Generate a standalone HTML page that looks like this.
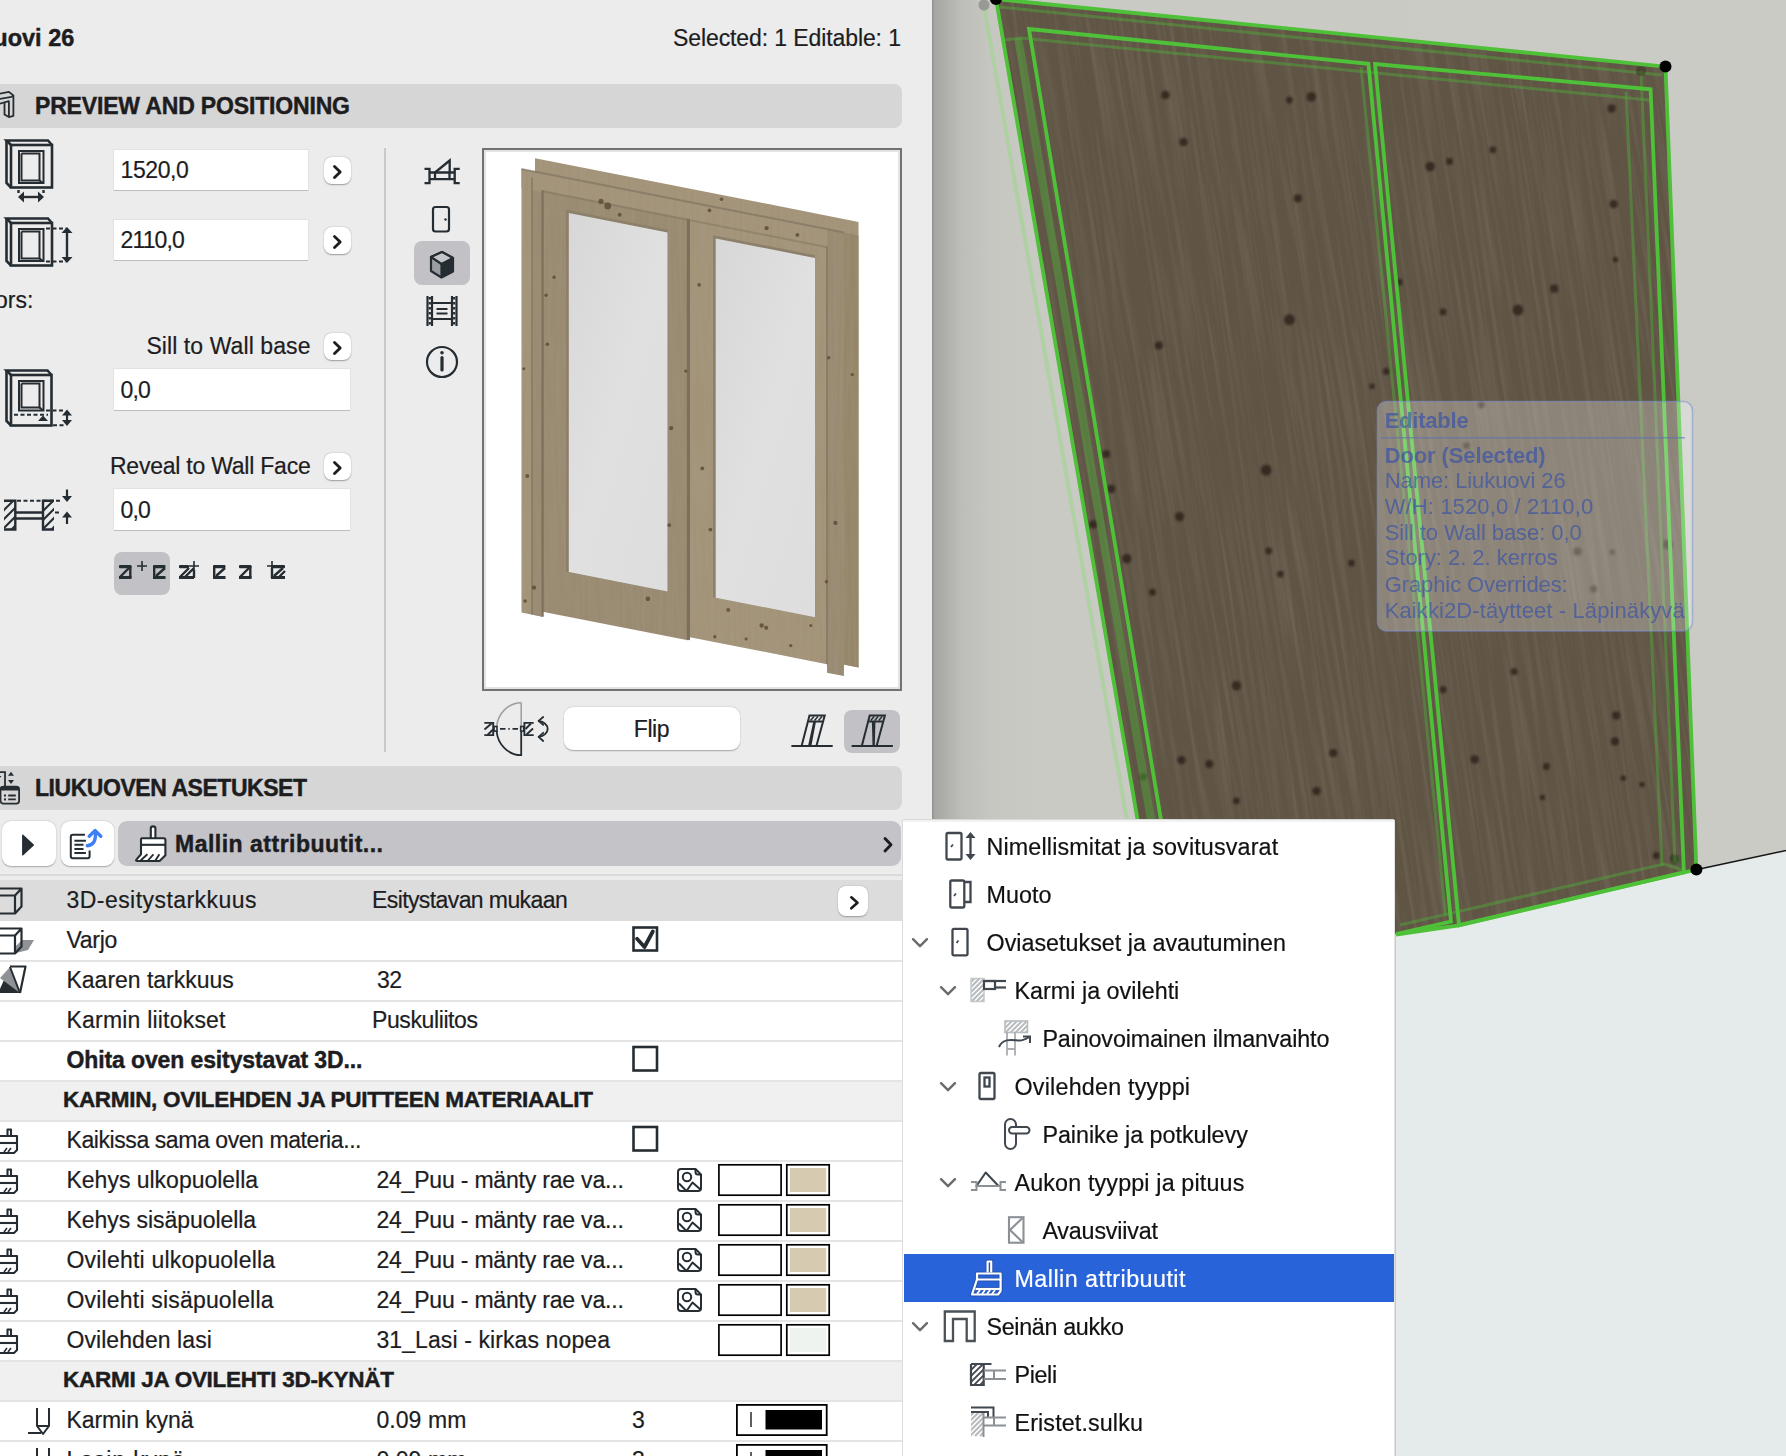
<!DOCTYPE html>
<html><head><meta charset="utf-8"><style>
html,body{margin:0;padding:0;width:1786px;height:1456px;overflow:hidden;background:#ececec;}
body{position:relative;font-family:"Liberation Sans",sans-serif;}
.t{position:absolute;white-space:pre;line-height:30px;font-family:"Liberation Sans",sans-serif;}
svg{overflow:visible}
</style></head><body>
<svg style="position:absolute;left:0;top:0" width="1786" height="1456" viewBox="0 0 1786 1456"><defs>
<linearGradient id="wallg" gradientUnits="userSpaceOnUse" x1="932" y1="0" x2="1786" y2="0">
<stop offset="0" stop-color="#8e8e8b"/><stop offset="0.003" stop-color="#a6a6a2"/><stop offset="0.012" stop-color="#acaca8"/><stop offset="0.035" stop-color="#bdbdb9"/><stop offset="0.07" stop-color="#c7c7c2"/><stop offset="0.13" stop-color="#cacac5"/><stop offset="1" stop-color="#cbcbc6"/>
</linearGradient>
<filter id="grain" x="0" y="0" width="1" height="1" filterUnits="objectBoundingBox">
<feTurbulence type="fractalNoise" baseFrequency="0.22 0.006" numOctaves="3" seed="5" result="n"/>
<feColorMatrix in="n" type="matrix" values="0 0 0 0 0.45  0 0 0 0 0.41  0 0 0 0 0.35  1.1 0 0 0 -0.45" result="c"/>
<feComposite in="c" in2="SourceGraphic" operator="in"/>
</filter>
</defs><rect x="932" y="0" width="854" height="1456" fill="url(#wallg)"/><polygon points="1696.4,869.6 1786.0,850.5 1786.0,1456.0 1396.0,1456.0 1396.0,934.0" fill="#e5ebea"/><line x1="1696" y1="869.8" x2="1790" y2="849.6" stroke="#151515" stroke-width="1.5"/><polygon points="996.0,-1.0 1665.5,66.6 1696.4,869.6 1459.0,925.0 1396.0,934.0 1180.0,990.0 1168.6,1000.0" fill="#605545"/><defs><clipPath id="doorclip"><polygon points="996.0,-1.0 1665.5,66.6 1696.4,869.6 1459.0,925.0 1396.0,934.0 1180.0,990.0 1168.6,1000.0"/></clipPath></defs><g clip-path="url(#doorclip)" opacity="0.3"><rect x="850" y="-150" width="1000" height="1250" fill="#fff" filter="url(#grain)" transform="rotate(-9 1300 500)"/></g><defs><filter id="kb" x="-1" y="-1" width="3" height="3"><feGaussianBlur stdDeviation="0.9"/></filter></defs><g filter="url(#kb)"><circle cx="1165.4" cy="94.9" r="4.1" fill="#2a2116" opacity="0.8"/><circle cx="1289.4" cy="100.1" r="3.4" fill="#2a2116" opacity="0.8"/><circle cx="1311.3" cy="96.9" r="4.7" fill="#2a2116" opacity="0.8"/><circle cx="1183.5" cy="142.1" r="4.1" fill="#2a2116" opacity="0.8"/><circle cx="1297.8" cy="198.3" r="4.1" fill="#2a2116" opacity="0.8"/><circle cx="1430.2" cy="166.6" r="4.7" fill="#2a2116" opacity="0.8"/><circle cx="1449.5" cy="161.4" r="3.4" fill="#2a2116" opacity="0.8"/><circle cx="1492.8" cy="149.8" r="3.4" fill="#2a2116" opacity="0.8"/><circle cx="1611.6" cy="108.5" r="4.1" fill="#2a2116" opacity="0.8"/><circle cx="1613.6" cy="204.1" r="4.1" fill="#2a2116" opacity="0.8"/><circle cx="1615.5" cy="259.6" r="2.7" fill="#2a2116" opacity="0.8"/><circle cx="1289.4" cy="319.7" r="5.4" fill="#2a2116" opacity="0.8"/><circle cx="1158.9" cy="345.5" r="4.1" fill="#2a2116" opacity="0.8"/><circle cx="1386.3" cy="371.3" r="3.4" fill="#2a2116" opacity="0.8"/><circle cx="1372.1" cy="386.2" r="2.7" fill="#2a2116" opacity="0.8"/><circle cx="1399.2" cy="282.2" r="3.4" fill="#2a2116" opacity="0.8"/><circle cx="1443.1" cy="311.9" r="3.4" fill="#2a2116" opacity="0.8"/><circle cx="1518.0" cy="310.0" r="5.4" fill="#2a2116" opacity="0.8"/><circle cx="1554.2" cy="288.7" r="4.1" fill="#2a2116" opacity="0.8"/><circle cx="1266.1" cy="470.1" r="5.4" fill="#2a2116" opacity="0.8"/><circle cx="1106.0" cy="454.0" r="4.1" fill="#2a2116" opacity="0.8"/><circle cx="1111.2" cy="488.9" r="4.1" fill="#2a2116" opacity="0.8"/><circle cx="1179.6" cy="516.6" r="4.7" fill="#2a2116" opacity="0.8"/><circle cx="1093.1" cy="524.4" r="4.1" fill="#2a2116" opacity="0.8"/><circle cx="1126.7" cy="558.6" r="4.7" fill="#2a2116" opacity="0.8"/><circle cx="1152.5" cy="592.2" r="3.4" fill="#2a2116" opacity="0.8"/><circle cx="1268.7" cy="550.9" r="3.4" fill="#2a2116" opacity="0.8"/><circle cx="1280.3" cy="574.1" r="3.4" fill="#2a2116" opacity="0.8"/><circle cx="1351.4" cy="563.1" r="3.4" fill="#2a2116" opacity="0.8"/><circle cx="1236.4" cy="685.8" r="4.7" fill="#2a2116" opacity="0.8"/><circle cx="1333.3" cy="753.0" r="4.1" fill="#2a2116" opacity="0.8"/><circle cx="1316.5" cy="791.1" r="4.1" fill="#2a2116" opacity="0.8"/><circle cx="1236.4" cy="800.8" r="3.4" fill="#2a2116" opacity="0.8"/><circle cx="1181.5" cy="760.1" r="4.1" fill="#2a2116" opacity="0.8"/><circle cx="1209.3" cy="764.0" r="4.1" fill="#2a2116" opacity="0.8"/><circle cx="1143.4" cy="776.9" r="3.4" fill="#2a2116" opacity="0.8"/><circle cx="1514.1" cy="671.6" r="3.4" fill="#2a2116" opacity="0.8"/><circle cx="1616.2" cy="715.5" r="4.1" fill="#2a2116" opacity="0.8"/><circle cx="1614.9" cy="741.4" r="4.1" fill="#2a2116" opacity="0.8"/><circle cx="1642.0" cy="784.6" r="2.7" fill="#2a2116" opacity="0.8"/><circle cx="1623.3" cy="778.2" r="2.7" fill="#2a2116" opacity="0.8"/><circle cx="1474.7" cy="759.4" r="4.1" fill="#2a2116" opacity="0.8"/><circle cx="1546.4" cy="766.5" r="3.4" fill="#2a2116" opacity="0.8"/><circle cx="1542.5" cy="797.5" r="2.7" fill="#2a2116" opacity="0.8"/><circle cx="1443.1" cy="689.7" r="3.4" fill="#2a2116" opacity="0.8"/><circle cx="1674.3" cy="858.9" r="4.1" fill="#2a2116" opacity="0.8"/><circle cx="1656.2" cy="855.7" r="3.4" fill="#2a2116" opacity="0.8"/><circle cx="1577.4" cy="551.5" r="4.1" fill="#2a2116" opacity="0.8"/><circle cx="1612.3" cy="552.1" r="2.7" fill="#2a2116" opacity="0.8"/><circle cx="1481.2" cy="404.9" r="3.4" fill="#2a2116" opacity="0.8"/><circle cx="1466.3" cy="445.6" r="3.4" fill="#2a2116" opacity="0.8"/><circle cx="1593.6" cy="589.0" r="3.4" fill="#2a2116" opacity="0.8"/><circle cx="1667.8" cy="544.4" r="4.7" fill="#2a2116" opacity="0.8"/></g><line x1="984" y1="6" x2="1127" y2="820" stroke="#9cd58d" stroke-opacity="0.6" stroke-width="4"/><circle cx="984" cy="5" r="5.5" fill="#8d8d8d" opacity="0.8"/><polyline points="1000.0,7.0 1662.0,75.0" fill="none" stroke="#4fae3a" stroke-opacity="0.45" stroke-width="3"/><polyline points="1004.0,40.0 1021.0,38.0 1649.0,100.0" fill="none" stroke="#4fae3a" stroke-opacity="0.45" stroke-width="3"/><line x1="1018" y1="38" x2="1151" y2="820" stroke="#4fae3a" stroke-opacity="0.45" stroke-width="8"/><line x1="1361" y1="67" x2="1445.5" y2="915" stroke="#4fae3a" stroke-opacity="0.45" stroke-width="3"/><line x1="1626" y1="92" x2="1662" y2="866" stroke="#4fae3a" stroke-opacity="0.45" stroke-width="3"/><line x1="1641" y1="71" x2="1675" y2="862" stroke="#4fae3a" stroke-opacity="0.45" stroke-width="3"/><polyline points="1400.0,925.0 1664.0,864.0 1683.0,870.0" fill="none" stroke="#4fae3a" stroke-opacity="0.45" stroke-width="3"/><circle cx="1641" cy="71" r="5" fill="#3a3020" opacity="0.5"/><circle cx="1676" cy="860" r="5" fill="#3a6a30" opacity="0.45"/><polyline points="1168.6,1000.0 996.0,-1.0 1665.5,66.6 1696.4,869.6 1459.0,925.5 1396.0,934.5" fill="none" stroke="#4ec139" stroke-width="3.8" stroke-linejoin="miter"/><polyline points="1191.0,1000.0 1029.0,29.0 1368.4,63.8 1451.0,921.5 1396.0,934.0" fill="none" stroke="#4ec139" stroke-width="3.8" stroke-linejoin="miter"/><polygon points="1375.0,64.0 1650.6,89.3 1683.9,872.3 1459.0,925.1" fill="none" stroke="#4ec139" stroke-width="3.8" stroke-linejoin="miter"/><circle cx="1665.5" cy="66.6" r="6" fill="#000"/><circle cx="1696.4" cy="869.6" r="6" fill="#000"/><circle cx="996" cy="-1" r="6" fill="#000"/><rect x="1377.5" y="401.5" width="315" height="229.5" rx="9" fill="#ffffff" fill-opacity="0.28" stroke="#7d93d6" stroke-opacity="0.55" stroke-width="1.6"/><line x1="1381" y1="437.7" x2="1685" y2="437.7" stroke="#5a6fb8" stroke-opacity="0.6" stroke-width="1.6"/></svg>
<div class="t" style="left:1384.7px;top:406.38px;font-size:22px;font-weight:bold;-webkit-text-stroke:0.45px currentColor;letter-spacing:-0.225px;color:rgba(45,75,175,0.6);-webkit-text-stroke:0;">Editable</div>
<div class="t" style="left:1384.7px;top:440.68px;font-size:22px;font-weight:bold;-webkit-text-stroke:0.45px currentColor;letter-spacing:-0.114px;color:rgba(45,75,175,0.6);-webkit-text-stroke:0;">Door (Selected)</div>
<div class="t" style="left:1384.7px;top:466.38px;font-size:22px;-webkit-text-stroke:0.2px currentColor;letter-spacing:-0.076px;color:rgba(45,75,175,0.6);-webkit-text-stroke:0;">Name: Liukuovi 26</div>
<div class="t" style="left:1384.7px;top:492.08px;font-size:22px;-webkit-text-stroke:0.2px currentColor;letter-spacing:0.117px;color:rgba(45,75,175,0.6);-webkit-text-stroke:0;">W/H: 1520,0 / 2110,0</div>
<div class="t" style="left:1384.7px;top:517.78px;font-size:22px;-webkit-text-stroke:0.2px currentColor;letter-spacing:-0.071px;color:rgba(45,75,175,0.6);-webkit-text-stroke:0;">Sill to Wall base: 0,0</div>
<div class="t" style="left:1384.7px;top:543.38px;font-size:22px;-webkit-text-stroke:0.2px currentColor;letter-spacing:-0.035px;color:rgba(45,75,175,0.6);-webkit-text-stroke:0;">Story: 2. 2. kerros</div>
<div class="t" style="left:1384.7px;top:570.08px;font-size:22px;-webkit-text-stroke:0.2px currentColor;letter-spacing:-0.096px;color:rgba(45,75,175,0.6);-webkit-text-stroke:0;">Graphic Overrides:</div>
<div class="t" style="left:1384.7px;top:595.78px;font-size:22px;-webkit-text-stroke:0.2px currentColor;letter-spacing:0.099px;color:rgba(45,75,175,0.6);-webkit-text-stroke:0;">Kaikki2D-täytteet - Läpinäkyvä</div>
<div style="position:absolute;left:0px;top:0px;width:932px;height:1456px;background:#ececec;"></div>
<div style="position:absolute;left:-10px;top:84px;width:912px;height:44px;background:#d6d6d6;border-radius:8px;"></div>
<div style="position:absolute;left:-10px;top:766px;width:912px;height:44px;background:#d6d6d6;border-radius:8px;"></div>
<div class="t" style="left:673px;top:23.03px;font-size:23px;-webkit-text-stroke:0.2px currentColor;letter-spacing:-0.099px;color:#1d1d1f;">Selected: 1 Editable: 1</div>
<div class="t" style="left:-55px;top:22.86px;font-size:23.5px;font-weight:bold;-webkit-text-stroke:0.45px currentColor;color:#1d1d1f;">Liukuovi 26</div>
<div class="t" style="left:35px;top:91.03px;font-size:23px;font-weight:bold;-webkit-text-stroke:0.45px currentColor;letter-spacing:-0.165px;color:#1d1d1f;">PREVIEW AND POSITIONING</div>
<div class="t" style="left:35px;top:773.03px;font-size:23px;font-weight:bold;-webkit-text-stroke:0.45px currentColor;letter-spacing:-0.460px;color:#1d1d1f;">LIUKUOVEN ASETUKSET</div>
<svg style="position:absolute;left:0px;top:0px;" width="40" height="130" viewBox="0 0 40 130"><g fill="none" stroke="#252d33" stroke-width="1.8" stroke-linejoin="round"><path d="M-2,94.1 L8.9,91.9 L13.4,95.5 L13.4,115.8 L8.9,117.1 L4.5,114.4 L4.5,102.5"/><path d="M-2,99.3 L11.5,96.9 L13.4,95.5"/><path d="M-2,104.2 L8.9,101.2 L8.9,117.1"/></g></svg>
<svg style="position:absolute;left:0px;top:0px;" width="40" height="820" viewBox="0 0 40 820"><g fill="none" stroke="#252d33" stroke-width="1.8"><path d="M-4,772.2 L5,772.2 L5,786.5"/><rect x="0.5" y="786.6" width="18.6" height="17" rx="2.8"/><path d="M8.2,795.5 L15.8,795.5 M8.2,799.4 L15.8,799.4"/></g><g fill="#252d33"><path d="M8,775.8 L11,771.8 L14,775.8 Z M8,780 L11,784 L14,780 Z"/><rect x="0.5" y="786.6" width="18.6" height="3.8" rx="1.5"/><rect x="4" y="794.5" width="2" height="2"/><rect x="4" y="798.4" width="2" height="2"/><path d="M-1,776 L1.5,776 L-1,779 Z"/></g></svg>
<div style="position:absolute;left:114px;top:150px;width:194px;height:40px;background:#fff;box-shadow:0 1px 0 #bdbdbd, 0 0 0 0.5px #d8d8d8;"></div>
<div class="t" style="left:120.5px;top:155.23px;font-size:23px;-webkit-text-stroke:0.2px currentColor;letter-spacing:-0.412px;color:#1d1d1f;">1520,0</div>
<div style="position:absolute;left:324px;top:157px;width:27px;height:27px;background:#fff;border-radius:8px;box-shadow:0 0.5px 1.5px rgba(0,0,0,0.35);"></div>
<svg style="position:absolute;left:324px;top:157px;" width="27" height="27" viewBox="0 0 27 27"><path d="M10.5,9.5 L16.2,15 L10.5,20.5" fill="none" stroke="#1d1d1f" stroke-width="2.8" stroke-linecap="round" stroke-linejoin="round"/></svg>
<div style="position:absolute;left:114px;top:220px;width:194px;height:40px;background:#fff;box-shadow:0 1px 0 #bdbdbd, 0 0 0 0.5px #d8d8d8;"></div>
<div class="t" style="left:120.5px;top:225.03px;font-size:23px;-webkit-text-stroke:0.2px currentColor;letter-spacing:-0.848px;color:#1d1d1f;">2110,0</div>
<div style="position:absolute;left:324px;top:227px;width:27px;height:27px;background:#fff;border-radius:8px;box-shadow:0 0.5px 1.5px rgba(0,0,0,0.35);"></div>
<svg style="position:absolute;left:324px;top:227px;" width="27" height="27" viewBox="0 0 27 27"><path d="M10.5,9.5 L16.2,15 L10.5,20.5" fill="none" stroke="#1d1d1f" stroke-width="2.8" stroke-linecap="round" stroke-linejoin="round"/></svg>
<div class="t" style="left:-5px;top:285.03px;font-size:23px;-webkit-text-stroke:0.2px currentColor;color:#1d1d1f;">ors:</div>
<div class="t" style="right:1475.5px;top:331.03px;font-size:23px;-webkit-text-stroke:0.2px currentColor;letter-spacing:0.077px;color:#1d1d1f;">Sill to Wall base</div>
<div style="position:absolute;left:324px;top:333px;width:27px;height:27px;background:#fff;border-radius:8px;box-shadow:0 0.5px 1.5px rgba(0,0,0,0.35);"></div>
<svg style="position:absolute;left:324px;top:333px;" width="27" height="27" viewBox="0 0 27 27"><path d="M10.5,9.5 L16.2,15 L10.5,20.5" fill="none" stroke="#1d1d1f" stroke-width="2.8" stroke-linecap="round" stroke-linejoin="round"/></svg>
<div style="position:absolute;left:114px;top:369px;width:236px;height:41px;background:#fff;box-shadow:0 1px 0 #bdbdbd, 0 0 0 0.5px #d8d8d8;"></div>
<div class="t" style="left:120.5px;top:375.43px;font-size:23px;-webkit-text-stroke:0.2px currentColor;letter-spacing:-0.892px;color:#1d1d1f;">0,0</div>
<div class="t" style="right:1475.5px;top:451.03px;font-size:23px;-webkit-text-stroke:0.2px currentColor;letter-spacing:-0.231px;color:#1d1d1f;">Reveal to Wall Face</div>
<div style="position:absolute;left:324px;top:453px;width:27px;height:27px;background:#fff;border-radius:8px;box-shadow:0 0.5px 1.5px rgba(0,0,0,0.35);"></div>
<svg style="position:absolute;left:324px;top:453px;" width="27" height="27" viewBox="0 0 27 27"><path d="M10.5,9.5 L16.2,15 L10.5,20.5" fill="none" stroke="#1d1d1f" stroke-width="2.8" stroke-linecap="round" stroke-linejoin="round"/></svg>
<div style="position:absolute;left:114px;top:489px;width:236px;height:41px;background:#fff;box-shadow:0 1px 0 #bdbdbd, 0 0 0 0.5px #d8d8d8;"></div>
<div class="t" style="left:120.5px;top:495.43px;font-size:23px;-webkit-text-stroke:0.2px currentColor;letter-spacing:-0.892px;color:#1d1d1f;">0,0</div>
<div style="position:absolute;left:384px;top:148px;width:2px;height:604px;background:#c9c9c9;"></div>
<svg style="position:absolute;left:0px;top:0px;" width="100" height="600" viewBox="0 0 100 600"><g fill="none" stroke="#252d33" stroke-width="2.6" stroke-linejoin="miter"><path d="M11.0,145.0 L6.5,140.5 L48.0,140.5 L52.0,145.0"/><path d="M6.5,140.5 L6.5,183.0 L11.0,187.5"/><rect x="11.0" y="145.0" width="41.0" height="42.5"/></g><g fill="none" stroke="#252d33" stroke-width="2"><rect x="19" y="151" width="24.5" height="32"/><path d="M21.5,153.5 L21.5,180.5 L39.5,180.5 L39.5,153.5 L21.5,153.5"/><path d="M39.5,180.5 L43,183"/></g><g stroke="#252d33" stroke-width="2.4" fill="none"><path d="M22,197 L40,197"/><path d="M18.5,190 L18.5,193 M43.5,190 L43.5,193"/></g><g fill="#252d33"><path d="M18,197 L24,191.5 L24,202.5 Z M44,197 L38,191.5 L38,202.5 Z"/></g><g fill="none" stroke="#252d33" stroke-width="2.6" stroke-linejoin="miter"><path d="M11.0,223.0 L6.5,218.5 L48.0,218.5 L52.0,223.0"/><path d="M6.5,218.5 L6.5,261.0 L11.0,265.5"/><rect x="11.0" y="223.0" width="41.0" height="42.5"/></g><g fill="none" stroke="#252d33" stroke-width="2"><rect x="19" y="229" width="24.5" height="32"/><path d="M21.5,231.5 L21.5,258.5 L39.5,258.5 L39.5,231.5 L21.5,231.5"/><path d="M39.5,258.5 L43,261"/></g><g stroke="#252d33" stroke-width="2" fill="none" stroke-dasharray="4,2.5"><path d="M46,228.5 L66,228.5 M46,261.5 L66,261.5"/></g><g stroke="#252d33" stroke-width="2.4"><path d="M67,233 L67,257"/></g><g fill="#252d33"><path d="M67,227 L61.5,233 L72.5,233 Z M67,263 L61.5,257 L72.5,257 Z"/></g><g fill="none" stroke="#252d33" stroke-width="2.6" stroke-linejoin="miter"><path d="M11.0,375.0 L6.5,370.5 L47.5,370.5 L51.5,375.0"/><path d="M6.5,370.5 L6.5,421.0 L11.0,425.5"/><rect x="11.0" y="375.0" width="40.5" height="50.5"/></g><g fill="none" stroke="#252d33" stroke-width="2"><rect x="19" y="381" width="24.5" height="29.5"/><path d="M21.5,383.5 L21.5,407.5 L39.5,407.5 L39.5,383.5 L21.5,383.5"/><path d="M39.5,407.5 L43,410.5"/></g><g stroke="#252d33" stroke-width="2" fill="none" stroke-dasharray="4,2.5"><path d="M14,414.7 L48,414.7 M46,410.5 L65,410.5 M53,425.2 L65,425.2"/></g><g fill="#252d33"><path d="M38,421 L43,415.5 L48,421 Z M67,409.5 L62,415.5 L72,415.5 Z M67,426 L62,420 L72,420 Z"/></g><path d="M67,414 L67,421" stroke="#252d33" stroke-width="2.2"/><defs><clipPath id="hl"><rect x="4" y="501" width="11" height="28"/></clipPath><clipPath id="hr"><rect x="43" y="501" width="11" height="28"/></clipPath></defs><g stroke="#252d33" stroke-width="2" fill="none"><g clip-path="url(#hl)"><path d="M-30,535 L10,495"/><path d="M-21,535 L19,495"/><path d="M-12,535 L28,495"/><path d="M-3,535 L37,495"/><path d="M6,535 L46,495"/><path d="M15,535 L55,495"/><path d="M24,535 L64,495"/><path d="M33,535 L73,495"/></g><g clip-path="url(#hr)"><path d="M10,535 L50,495"/><path d="M19,535 L59,495"/><path d="M28,535 L68,495"/><path d="M37,535 L77,495"/><path d="M46,535 L86,495"/><path d="M55,535 L95,495"/><path d="M64,535 L104,495"/><path d="M73,535 L113,495"/></g></g><g stroke="#252d33" stroke-width="2.4" fill="none"><path d="M4,500.8 L15.3,500.8 L15.3,529.5 L4,529.5"/><path d="M54,500.8 L43,500.8 L43,529.5 L54,529.5"/><path d="M15,512.5 L43,512.5 M15,518.5 L43,518.5"/></g><g stroke="#252d33" stroke-width="2" fill="none" stroke-dasharray="4,2.5"><path d="M17,500.8 L60,500.8 M55,512.5 L60,512.5"/></g><g stroke="#252d33" stroke-width="2.2"><path d="M67,489.5 L67,498 M67,515 L67,524"/></g><g fill="#252d33"><path d="M67,502 L62,496 L72,496 Z M67,511.5 L62,517.5 L72,517.5 Z"/></g></svg>
<svg style="position:absolute;left:0px;top:0px;" width="500" height="400" viewBox="0 0 500 400"><g fill="none" stroke="#252d33" stroke-width="2.3"><path d="M424.5,168.9 L429.5,168.9 L429.5,183.1 L424.5,183.1 M459.7,168.9 L454.7,168.9 L454.7,183.1 L459.7,183.1"/><path d="M429.5,172.5 L454.7,172.5 M429.5,179.2 L454.7,179.2 M435,172.5 L435,179.2 M449.5,172.5 L449.5,179.2"/><path d="M435,172.5 L449.7,160.5 L449.7,172.5"/></g><rect x="433" y="207" width="16" height="24.5" rx="2.5" fill="none" stroke="#252d33" stroke-width="2.2"/><circle cx="445.5" cy="219.5" r="1.2" fill="#252d33"/></svg>
<div style="position:absolute;left:414px;top:241px;width:56px;height:44px;background:#c1c1c6;border-radius:8px;"></div>
<svg style="position:absolute;left:0px;top:0px;" width="500" height="400" viewBox="0 0 500 400"><path d="M442,252 L453,258 L453,271.5 L441.5,277.5 L431,271 L431,257 Z" fill="#9a9ea2" stroke="#252d33" stroke-width="2.2" stroke-linejoin="round"/><path d="M441.5,264 L453,258 L453,271.5 L441.5,277.5 Z" fill="#252d33"/><path d="M431,257 L442,252 L453,258 L441.5,264 Z" fill="#c4c6c9" stroke="#252d33" stroke-width="2.2" stroke-linejoin="round"/><path d="M441.5,264 L441.5,277.5" stroke="#252d33" stroke-width="2.2"/><g fill="none" stroke="#252d33" stroke-width="2.2"><path d="M427.5,296 L427.5,326 M432,296 L432,326 M452,296 L452,326 M456.5,296 L456.5,326"/><path d="M432,303 L452,303 M432,319 L452,319"/><path d="M436.5,309 L447.5,309 M436.5,313.5 L447.5,313.5"/></g><g stroke="#252d33" stroke-width="2.2" stroke-dasharray="2.5,2.5"><path d="M429.8,297 L429.8,326 M454.2,297 L454.2,326"/></g><circle cx="442" cy="362" r="15" fill="none" stroke="#252d33" stroke-width="2.2"/><circle cx="442" cy="352.8" r="1.8" fill="#252d33"/><path d="M442,357.5 L442,370" stroke="#252d33" stroke-width="3.2" stroke-linecap="round"/></svg>
<div style="position:absolute;left:482px;top:148px;width:420px;height:543px;background:#fff;box-sizing:border-box;border:2px solid #727272;box-shadow:inset 0 0 0 2px #e3e3e3;"></div>
<svg style="position:absolute;left:0px;top:0px;" width="910" height="700" viewBox="0 0 910 700"><defs><linearGradient id="glg" x1="0" y1="0" x2="1" y2="1"><stop offset="0" stop-color="#d6d7d6"/><stop offset="0.5" stop-color="#dfe0df"/><stop offset="1" stop-color="#dcdddc"/></linearGradient><filter id="wg" x="0" y="0" width="1" height="1"><feTurbulence type="fractalNoise" baseFrequency="0.35 0.012" numOctaves="2" seed="7" result="n"/><feColorMatrix in="n" type="matrix" values="0 0 0 0 0.45  0 0 0 0 0.4  0 0 0 0 0.33  0.8 0 0 0 -0.25" result="c"/><feComposite in="c" in2="SourceGraphic" operator="in"/></filter></defs><g transform="matrix(1,0.197,0,1,0,-102.74)"><rect x="535" y="155.5" width="323.5" height="445.5" fill="#a29378"/><rect x="844" y="169" width="14.5" height="432" fill="#958669"/><rect x="521.5" y="169" width="21" height="443.5" fill="#a29378"/><rect x="532" y="180" width="10.5" height="432.5" fill="#998a71"/><rect x="521.5" y="169" width="322.5" height="19" fill="#a29378"/><rect x="827" y="169" width="17" height="443.5" fill="#998a71"/><rect x="542.5" y="186" width="145.5" height="421.5" fill="#998a71"/><rect x="690" y="186" width="137" height="418" fill="#a29378"/><path d="M535,155.5 L858.5,155.5 L858.5,601 L844,601 L844,612.5 L827,612.5 L827,604 L690,604 L690,607.5 L542.5,607.5 L542.5,612.5 L521.5,612.5 L521.5,169 L535,169 Z" fill="#fff" filter="url(#wg)" opacity="0.45"/><rect x="531" y="176" width="2" height="436.5" fill="#7c705d" opacity="0.55"/><rect x="521.5" y="168" width="322.5" height="2" fill="#7c705d" opacity="0.6"/><rect x="542.5" y="186" width="284.5" height="2" fill="#7c705d" opacity="0.45"/><rect x="541.5" y="186" width="2.2" height="426.5" fill="#7c705d"/><rect x="686.8" y="186" width="3.2" height="421" fill="#7c705d"/><rect x="826" y="186" width="2" height="418" fill="#7c705d" opacity="0.6"/><rect x="566" y="201" width="102" height="362" fill="#8c806b"/><rect x="568.8" y="203.7" width="98.7" height="359" fill="url(#glg)"/><rect x="713" y="197.5" width="102" height="362" fill="#8c806b"/><rect x="715.7" y="200.2" width="99.3" height="359.3" fill="url(#glg)"/></g><circle cx="607.7" cy="205.9" r="3.38" fill="#5a4833" opacity="0.8"/><circle cx="601.0" cy="201.4" r="2.60" fill="#5a4833" opacity="0.8"/><circle cx="619.7" cy="214.8" r="1.95" fill="#5a4833" opacity="0.8"/><circle cx="721.5" cy="199.2" r="1.82" fill="#5a4833" opacity="0.8"/><circle cx="709.5" cy="210.4" r="1.82" fill="#5a4833" opacity="0.8"/><circle cx="766.6" cy="228.2" r="2.08" fill="#5a4833" opacity="0.8"/><circle cx="797.4" cy="234.9" r="1.95" fill="#5a4833" opacity="0.8"/><circle cx="554.1" cy="277.3" r="1.69" fill="#5a4833" opacity="0.8"/><circle cx="546.1" cy="295.2" r="1.69" fill="#5a4833" opacity="0.8"/><circle cx="547.4" cy="344.3" r="1.82" fill="#5a4833" opacity="0.8"/><circle cx="523.8" cy="368.8" r="1.56" fill="#5a4833" opacity="0.8"/><circle cx="527.3" cy="476.0" r="1.95" fill="#5a4833" opacity="0.8"/><circle cx="534.0" cy="587.6" r="2.21" fill="#5a4833" opacity="0.8"/><circle cx="525.1" cy="601.0" r="1.82" fill="#5a4833" opacity="0.8"/><circle cx="647.9" cy="598.8" r="2.34" fill="#5a4833" opacity="0.8"/><circle cx="671.1" cy="428.2" r="2.08" fill="#5a4833" opacity="0.8"/><circle cx="685.8" cy="371.1" r="1.69" fill="#5a4833" opacity="0.8"/><circle cx="669.3" cy="525.1" r="1.95" fill="#5a4833" opacity="0.8"/><circle cx="710.4" cy="529.6" r="1.95" fill="#5a4833" opacity="0.8"/><circle cx="702.3" cy="468.4" r="1.95" fill="#5a4833" opacity="0.8"/><circle cx="699.2" cy="284.9" r="1.82" fill="#5a4833" opacity="0.8"/><circle cx="828.7" cy="357.7" r="1.69" fill="#5a4833" opacity="0.8"/><circle cx="852.3" cy="374.6" r="1.69" fill="#5a4833" opacity="0.8"/><circle cx="835.4" cy="522.9" r="2.08" fill="#5a4833" opacity="0.8"/><circle cx="826.4" cy="581.8" r="1.69" fill="#5a4833" opacity="0.8"/><circle cx="728.2" cy="609.9" r="1.95" fill="#5a4833" opacity="0.8"/><circle cx="761.7" cy="625.5" r="2.21" fill="#5a4833" opacity="0.8"/><circle cx="766.2" cy="627.8" r="2.08" fill="#5a4833" opacity="0.8"/><circle cx="714.8" cy="636.7" r="1.69" fill="#5a4833" opacity="0.8"/><circle cx="790.7" cy="645.6" r="1.69" fill="#5a4833" opacity="0.8"/><circle cx="810.8" cy="625.5" r="1.56" fill="#5a4833" opacity="0.8"/><circle cx="746.1" cy="638.9" r="1.56" fill="#5a4833" opacity="0.8"/></svg>
<div style="position:absolute;left:564px;top:707px;width:176px;height:43px;background:#fff;border-radius:9px;box-shadow:0 0.5px 1.5px rgba(0,0,0,0.3);"></div>
<div class="t" style="left:651.5px;transform:translateX(-50%);top:714.03px;font-size:23px;-webkit-text-stroke:0.2px currentColor;letter-spacing:-0.421px;color:#1d1d1f;">Flip</div>
<svg style="position:absolute;left:0px;top:0px;" width="910" height="800" viewBox="0 0 910 800"><path d="M521.2,702.8 A25,26.3 0 0 0 496.6,727" fill="none" stroke="#9a9ea2" stroke-width="1.5"/><path d="M521.2,702.8 L521.2,726" stroke="#9a9ea2" stroke-width="1.5"/><path d="M496.6,731 A25,26.3 0 0 0 521.2,755.2 L521.2,731.5" fill="none" stroke="#252d33" stroke-width="1.8"/><g stroke="#252d33" stroke-width="1.8"><path d="M500,728.8 L505.5,728.8 M508.3,728.8 L509.7,728.8 M512.5,728.8 L518,728.8"/></g><g fill="none" stroke="#252d33" stroke-width="1.6"><rect x="494" y="726.5" width="3" height="4.6"/><rect x="520.7" y="726.5" width="3" height="4.6"/></g><g fill="none" stroke="#252d33" stroke-width="1.9"><path d="M484.3,722.9 L493.2,722.9 L493.2,735.1 L484.3,735.1"/><path d="M484.5,729.5 L491.5,723.5 M487.5,735 L493,729.5"/><path d="M533.7,722.9 L524.4,722.9 L524.4,735.1 L533.7,735.1"/><path d="M525.5,729 L531,723.5 M526.5,734.5 L533,728.5"/></g><g fill="none" stroke="#252d33" stroke-width="1.8" stroke-linecap="round" stroke-linejoin="round"><path d="M538.8,721 A10.5,8 0 0 1 538.8,736.8"/><path d="M543.2,717 L538.6,720.9 L543.2,724.9 M543.2,732.8 L538.6,736.9 L543.2,741"/></g><g fill="none" stroke="#252d33" stroke-width="2"><path d="M791.4,745.9 L832.7,745.9"/><path d="M801.8,745.3 L809.5,715.6 L824.7,715.6 L816.6,745.3"/><path d="M808.9,721.5 L822.3,721.5"/></g><g stroke="#252d33" stroke-width="1.5"><path d="M810.5,720.5 L814,716.5 M814.5,720.5 L818,716.5 M818.5,720.5 L822,716.5"/></g><path d="M808.2,745.3 L811.5,745.3 L815.9,722 L813.2,722 Z" fill="#252d33"/></svg>
<div style="position:absolute;left:844px;top:710px;width:56px;height:43px;background:#c1c1c6;border-radius:8px;"></div>
<svg style="position:absolute;left:0px;top:0px;" width="910" height="800" viewBox="0 0 910 800"><g fill="none" stroke="#252d33" stroke-width="2"><path d="M851.6,745.9 L892.9000000000001,745.9"/><path d="M862.0,745.3 L869.7,715.6 L884.9000000000001,715.6 L876.8000000000001,745.3"/><path d="M869.1,721.5 L882.5,721.5"/></g><g stroke="#252d33" stroke-width="1.5"><path d="M870.7,720.5 L874.2,716.5 M874.7,720.5 L878.2,716.5 M878.7,720.5 L882.2,716.5"/></g><path d="M871.9000000000001,722 L875.4000000000001,722 L874.8000000000001,745.3 L872.5,745.3 Z" fill="#252d33"/></svg>
<div style="position:absolute;left:114px;top:552px;width:56px;height:43px;background:#c1c1c6;border-radius:8px;"></div>
<svg style="position:absolute;left:0px;top:0px;" width="300" height="600" viewBox="0 0 300 600"><g fill="#252d33"><rect x="119" y="565" width="12.5" height="3.3" rx="1"/><rect x="119" y="576" width="12.5" height="3"/></g><g fill="none" stroke="#252d33" stroke-width="2.4"><path d="M130.3,566 L130.3,578"/><path d="M120,577 L129,568"/></g><path d="M137,566 L147,566 M142,561 L142,571" stroke="#252d33" stroke-width="1.6"/><g fill="#252d33"><rect x="153" y="565" width="12.5" height="3.3" rx="1"/><rect x="153" y="576" width="12.5" height="3"/></g><g fill="none" stroke="#252d33" stroke-width="2.4"><path d="M154.2,566 L154.2,578"/><path d="M156,576 L165,568"/></g><g fill="#252d33"><rect x="179" y="565" width="10" height="3.3" rx="1"/><rect x="179" y="576" width="15" height="3"/></g><g fill="none" stroke="#252d33" stroke-width="2.4"><path d="M180,577 L189,568 M185,577 L194,568 M194,570 L194,578"/></g><path d="M189,566 L199,566 M194,561 L194,571" stroke="#252d33" stroke-width="1.6"/><g fill="#252d33"><rect x="213" y="565" width="12.5" height="3.3" rx="1"/><rect x="213" y="576" width="12.5" height="3"/></g><g fill="none" stroke="#252d33" stroke-width="2.4"><path d="M214.2,566 L214.2,578"/><path d="M216,576 L225,568"/></g><g fill="#252d33"><rect x="239" y="565" width="12.5" height="3.3" rx="1"/><rect x="239" y="576" width="12.5" height="3"/></g><g fill="none" stroke="#252d33" stroke-width="2.4"><path d="M250.3,566 L250.3,578"/><path d="M240,577 L249,568"/></g><g fill="#252d33"><rect x="271" y="565" width="14" height="3.3" rx="1"/><rect x="271" y="576" width="14" height="3"/></g><g fill="none" stroke="#252d33" stroke-width="2.4"><path d="M272,568 L272,578 M274,576 L283,568 M279,577 L285,571"/></g><path d="M267,566 L277,566 M272,561 L272,571" stroke="#252d33" stroke-width="1.6"/></svg>
<div style="position:absolute;left:2px;top:821px;width:53.5px;height:45px;background:#fff;border-radius:9px;box-shadow:0 0.5px 1.5px rgba(0,0,0,0.3);"></div>
<div style="position:absolute;left:60.5px;top:821px;width:53.5px;height:45px;background:#fff;border-radius:9px;box-shadow:0 0.5px 1.5px rgba(0,0,0,0.3);"></div>
<div style="position:absolute;left:118px;top:821px;width:783px;height:45px;background:#c3c3c8;border-radius:9px;"></div>
<svg style="position:absolute;left:0px;top:0px;" width="910" height="900" viewBox="0 0 910 900"><path d="M22.8,835.3 L33.3,845 L22.8,854.8 Z" fill="#252d33" stroke="#252d33" stroke-width="1.4" stroke-linejoin="round"/><g fill="none" stroke="#252d33" stroke-width="2" stroke-linejoin="round"><path d="M84.9,834.8 L72.8,834.8 Q70.8,834.8 70.8,836.8 L70.8,856.3 Q70.8,858.3 72.8,858.3 L87.6,858.3 Q89.6,858.3 89.6,856.3 L89.6,850.6"/><path d="M74.4,840.8 L85.9,840.8 M74.4,844.8 L83.5,844.8 M74.4,849 L83.5,849 M74.4,853 L85.9,853"/></g><g fill="none" stroke="#3d7ff5" stroke-width="3.4" stroke-linecap="round" stroke-linejoin="round"><path d="M87.3,845.8 C93,845 96,842 95.5,831.5"/><path d="M89.2,836.2 L95.2,830.6 L100.8,836.2"/></g><g fill="#fff" stroke="#252d33" stroke-width="2.1" stroke-linejoin="round"><path d="M150.8,838.2 L150.8,828.6 Q150.8,826.4 153.1,826.4 Q155.4,826.4 155.4,828.6 L155.4,838.2"/><path d="M142,838.3 L163.8,838.3 Q165.4,838.3 165.4,840 L165.4,855.2 L159.6,861 L137.5,861 Q135.3,861 136.4,859.6 L141,854.3 L141,840 Q141,838.3 142,838.3 Z"/><path d="M141,844.8 L165.4,844.8"/></g><g stroke="#252d33" stroke-width="1.9"><path d="M140.6,860.5 L147.4,854.3 M148,860.5 L153.4,854.3 M155.4,860.5 L159.4,854.3"/></g></svg>
<div class="t" style="left:175px;top:829.03px;font-size:23px;font-weight:bold;-webkit-text-stroke:0.45px currentColor;letter-spacing:0.498px;color:#1d1d1f;">Mallin attribuutit...</div>
<svg style="position:absolute;left:0px;top:0px;" width="910" height="900" viewBox="0 0 910 900"><path d="M885,838.5 L891,844.8 L885,851" fill="none" stroke="#1d1d1f" stroke-width="2.9" stroke-linecap="round" stroke-linejoin="round"/></svg>
<div style="position:absolute;left:0px;top:874px;width:902px;height:2px;background:#dadada;"></div>
<div style="position:absolute;left:0px;top:880px;width:902px;height:576px;background:#fff;"></div>
<div style="position:absolute;left:0px;top:880px;width:902px;height:41px;background:#dcdcdc;"></div>
<div style="position:absolute;left:0px;top:1081px;width:902px;height:40px;background:#f0f0f0;"></div>
<div style="position:absolute;left:0px;top:1361px;width:902px;height:40px;background:#f0f0f0;"></div>
<div style="position:absolute;left:0px;top:960px;width:902px;height:2px;background:#e4e4e4;"></div>
<div style="position:absolute;left:0px;top:1000px;width:902px;height:2px;background:#e4e4e4;"></div>
<div style="position:absolute;left:0px;top:1040px;width:902px;height:2px;background:#e4e4e4;"></div>
<div style="position:absolute;left:0px;top:1080px;width:902px;height:2px;background:#e4e4e4;"></div>
<div style="position:absolute;left:0px;top:1120px;width:902px;height:2px;background:#e4e4e4;"></div>
<div style="position:absolute;left:0px;top:1160px;width:902px;height:2px;background:#e4e4e4;"></div>
<div style="position:absolute;left:0px;top:1200px;width:902px;height:2px;background:#e4e4e4;"></div>
<div style="position:absolute;left:0px;top:1240px;width:902px;height:2px;background:#e4e4e4;"></div>
<div style="position:absolute;left:0px;top:1280px;width:902px;height:2px;background:#e4e4e4;"></div>
<div style="position:absolute;left:0px;top:1320px;width:902px;height:2px;background:#e4e4e4;"></div>
<div style="position:absolute;left:0px;top:1360px;width:902px;height:2px;background:#e4e4e4;"></div>
<div style="position:absolute;left:0px;top:1400px;width:902px;height:2px;background:#e4e4e4;"></div>
<div style="position:absolute;left:0px;top:1440px;width:902px;height:2px;background:#e4e4e4;"></div>
<div style="position:absolute;left:902px;top:880px;width:2px;height:576px;background:#e2e2e2;"></div>
<div class="t" style="left:66.5px;top:884.53px;font-size:23px;-webkit-text-stroke:0.2px currentColor;letter-spacing:0.451px;color:#1d1d1f;">3D-esitystarkkuus</div>
<div class="t" style="left:372px;top:884.53px;font-size:23px;-webkit-text-stroke:0.2px currentColor;letter-spacing:-0.596px;color:#1d1d1f;">Esitystavan mukaan</div>
<div class="t" style="left:66.5px;top:924.53px;font-size:23px;-webkit-text-stroke:0.2px currentColor;letter-spacing:-0.300px;color:#1d1d1f;">Varjo</div>
<div class="t" style="left:66.5px;top:964.53px;font-size:23px;-webkit-text-stroke:0.2px currentColor;letter-spacing:-0.013px;color:#1d1d1f;">Kaaren tarkkuus</div>
<div class="t" style="left:377px;top:964.53px;font-size:23px;-webkit-text-stroke:0.2px currentColor;letter-spacing:-0.594px;color:#1d1d1f;">32</div>
<div class="t" style="left:66.5px;top:1004.53px;font-size:23px;-webkit-text-stroke:0.2px currentColor;letter-spacing:0.204px;color:#1d1d1f;">Karmin liitokset</div>
<div class="t" style="left:372px;top:1004.53px;font-size:23px;-webkit-text-stroke:0.2px currentColor;letter-spacing:-0.394px;color:#1d1d1f;">Puskuliitos</div>
<div class="t" style="left:66.5px;top:1044.53px;font-size:23px;font-weight:bold;-webkit-text-stroke:0.45px currentColor;letter-spacing:-0.116px;color:#1d1d1f;">Ohita oven esitystavat 3D...</div>
<div class="t" style="left:66.5px;top:1124.53px;font-size:23px;-webkit-text-stroke:0.2px currentColor;letter-spacing:-0.421px;color:#1d1d1f;">Kaikissa sama oven materia...</div>
<div class="t" style="left:66.5px;top:1164.53px;font-size:23px;-webkit-text-stroke:0.2px currentColor;letter-spacing:-0.012px;color:#1d1d1f;">Kehys ulkopuolella</div>
<div class="t" style="left:376.4px;top:1164.53px;font-size:23px;-webkit-text-stroke:0.2px currentColor;letter-spacing:-0.194px;color:#1d1d1f;">24_Puu - mänty rae va...</div>
<div class="t" style="left:66.5px;top:1204.53px;font-size:23px;-webkit-text-stroke:0.2px currentColor;letter-spacing:-0.054px;color:#1d1d1f;">Kehys sisäpuolella</div>
<div class="t" style="left:376.4px;top:1204.53px;font-size:23px;-webkit-text-stroke:0.2px currentColor;letter-spacing:-0.194px;color:#1d1d1f;">24_Puu - mänty rae va...</div>
<div class="t" style="left:66.5px;top:1244.53px;font-size:23px;-webkit-text-stroke:0.2px currentColor;letter-spacing:0.201px;color:#1d1d1f;">Ovilehti ulkopuolella</div>
<div class="t" style="left:376.4px;top:1244.53px;font-size:23px;-webkit-text-stroke:0.2px currentColor;letter-spacing:-0.194px;color:#1d1d1f;">24_Puu - mänty rae va...</div>
<div class="t" style="left:66.5px;top:1284.53px;font-size:23px;-webkit-text-stroke:0.2px currentColor;letter-spacing:0.186px;color:#1d1d1f;">Ovilehti sisäpuolella</div>
<div class="t" style="left:376.4px;top:1284.53px;font-size:23px;-webkit-text-stroke:0.2px currentColor;letter-spacing:-0.194px;color:#1d1d1f;">24_Puu - mänty rae va...</div>
<div class="t" style="left:66.5px;top:1324.53px;font-size:23px;-webkit-text-stroke:0.2px currentColor;letter-spacing:0.064px;color:#1d1d1f;">Ovilehden lasi</div>
<div class="t" style="left:376.4px;top:1324.53px;font-size:23px;-webkit-text-stroke:0.2px currentColor;letter-spacing:0.104px;color:#1d1d1f;">31_Lasi - kirkas nopea</div>
<div class="t" style="left:66.5px;top:1404.53px;font-size:23px;-webkit-text-stroke:0.2px currentColor;letter-spacing:-0.083px;color:#1d1d1f;">Karmin kynä</div>
<div class="t" style="left:376.4px;top:1404.53px;font-size:23px;-webkit-text-stroke:0.2px currentColor;letter-spacing:0.086px;color:#1d1d1f;">0.09 mm</div>
<div class="t" style="left:66.5px;top:1444.53px;font-size:23px;-webkit-text-stroke:0.2px currentColor;letter-spacing:0.892px;color:#1d1d1f;">Lasin kynä</div>
<div class="t" style="left:376.4px;top:1444.53px;font-size:23px;-webkit-text-stroke:0.2px currentColor;letter-spacing:0.086px;color:#1d1d1f;">0.09 mm</div>
<div class="t" style="left:63px;top:1084.80px;font-size:22.5px;font-weight:bold;-webkit-text-stroke:0.45px currentColor;letter-spacing:-0.313px;color:#1d1d1f;">KARMIN, OVILEHDEN JA PUITTEEN MATERIAALIT</div>
<div class="t" style="left:63px;top:1364.80px;font-size:22.5px;font-weight:bold;-webkit-text-stroke:0.45px currentColor;letter-spacing:-0.278px;color:#1d1d1f;">KARMI JA OVILEHTI 3D-KYNÄT</div>
<div class="t" style="left:632px;top:1404.53px;font-size:23px;-webkit-text-stroke:0.2px currentColor;letter-spacing:-1.197px;color:#1d1d1f;">3</div>
<div class="t" style="left:632px;top:1444.53px;font-size:23px;-webkit-text-stroke:0.2px currentColor;letter-spacing:-1.197px;color:#1d1d1f;">3</div>
<div style="position:absolute;left:838px;top:885.5px;width:30px;height:30.5px;background:#fff;border-radius:8px;box-shadow:0 0.5px 1.5px rgba(0,0,0,0.3);"></div>
<svg style="position:absolute;left:0px;top:0px;" width="910" height="900" viewBox="0 0 910 900"><path d="M851.3,897.3 L857.5,902.8 L851.3,908.3" fill="none" stroke="#1d1d1f" stroke-width="2.6" stroke-linecap="round" stroke-linejoin="round"/></svg>
<svg style="position:absolute;left:0px;top:0px;" width="910" height="1456" viewBox="0 0 910 1456"><rect x="633.5" y="927.5" width="23.5" height="23" fill="#fff" stroke="#252d33" stroke-width="2.6"/><path d="M637,938.8 L644.5,947 L652.8,931.5" fill="none" stroke="#252d33" stroke-width="3.8" stroke-linejoin="round" stroke-linecap="round"/><rect x="633.5" y="1047" width="23.5" height="23.5" fill="#fff" stroke="#252d33" stroke-width="2.6"/><rect x="633.5" y="1127" width="23.5" height="23.5" fill="#fff" stroke="#252d33" stroke-width="2.6"/><rect x="718.9" y="1164.8" width="62.2" height="30.4" fill="#fff" stroke="#000" stroke-width="1.7"/><rect x="786.8" y="1164.8" width="42.4" height="30.4" fill="#fff" stroke="#000" stroke-width="1.7"/><rect x="790" y="1168" width="36.2" height="24" fill="#d6cbb1"/><rect x="718.9" y="1204.8" width="62.2" height="30.4" fill="#fff" stroke="#000" stroke-width="1.7"/><rect x="786.8" y="1204.8" width="42.4" height="30.4" fill="#fff" stroke="#000" stroke-width="1.7"/><rect x="790" y="1208" width="36.2" height="24" fill="#d6cbb1"/><rect x="718.9" y="1244.8" width="62.2" height="30.4" fill="#fff" stroke="#000" stroke-width="1.7"/><rect x="786.8" y="1244.8" width="42.4" height="30.4" fill="#fff" stroke="#000" stroke-width="1.7"/><rect x="790" y="1248" width="36.2" height="24" fill="#d6cbb1"/><rect x="718.9" y="1284.8" width="62.2" height="30.4" fill="#fff" stroke="#000" stroke-width="1.7"/><rect x="786.8" y="1284.8" width="42.4" height="30.4" fill="#fff" stroke="#000" stroke-width="1.7"/><rect x="790" y="1288" width="36.2" height="24" fill="#d6cbb1"/><rect x="718.9" y="1324.8" width="62.2" height="30.4" fill="#fff" stroke="#000" stroke-width="1.7"/><rect x="786.8" y="1324.8" width="42.4" height="30.4" fill="#fff" stroke="#000" stroke-width="1.7"/><rect x="790" y="1328" width="36.2" height="24" fill="#eef3ef"/><g fill="none" stroke="#252d33" stroke-width="2" stroke-linejoin="round"><path d="M681,1169 L695.5,1169 L701,1174.5 L701,1188 Q701,1191 698,1191 L681,1191 Q678,1191 678,1188 L678,1172 Q678,1169 681,1169 Z"/><path d="M695.5,1169 L695.5,1172 Q695.5,1174.5 698,1174.5 L701,1174.5"/><circle cx="687" cy="1177" r="4.2"/><path d="M679,1183.5 L686.5,1191 L692.5,1182.5 L701,1190"/></g><g fill="none" stroke="#252d33" stroke-width="2" stroke-linejoin="round"><path d="M681,1209 L695.5,1209 L701,1214.5 L701,1228 Q701,1231 698,1231 L681,1231 Q678,1231 678,1228 L678,1212 Q678,1209 681,1209 Z"/><path d="M695.5,1209 L695.5,1212 Q695.5,1214.5 698,1214.5 L701,1214.5"/><circle cx="687" cy="1217" r="4.2"/><path d="M679,1223.5 L686.5,1231 L692.5,1222.5 L701,1230"/></g><g fill="none" stroke="#252d33" stroke-width="2" stroke-linejoin="round"><path d="M681,1249 L695.5,1249 L701,1254.5 L701,1268 Q701,1271 698,1271 L681,1271 Q678,1271 678,1268 L678,1252 Q678,1249 681,1249 Z"/><path d="M695.5,1249 L695.5,1252 Q695.5,1254.5 698,1254.5 L701,1254.5"/><circle cx="687" cy="1257" r="4.2"/><path d="M679,1263.5 L686.5,1271 L692.5,1262.5 L701,1270"/></g><g fill="none" stroke="#252d33" stroke-width="2" stroke-linejoin="round"><path d="M681,1289 L695.5,1289 L701,1294.5 L701,1308 Q701,1311 698,1311 L681,1311 Q678,1311 678,1308 L678,1292 Q678,1289 681,1289 Z"/><path d="M695.5,1289 L695.5,1292 Q695.5,1294.5 698,1294.5 L701,1294.5"/><circle cx="687" cy="1297" r="4.2"/><path d="M679,1303.5 L686.5,1311 L692.5,1302.5 L701,1310"/></g><rect x="736.9" y="1404.9" width="89.8" height="30.2" fill="#fff" stroke="#000" stroke-width="1.8"/><rect x="765.5" y="1410" width="56.5" height="19.5" fill="#000"/><path d="M751,1412 L751,1427" stroke="#1a1a1a" stroke-width="1.4"/><rect x="736.9" y="1444.9" width="89.8" height="30.2" fill="#fff" stroke="#000" stroke-width="1.8"/><rect x="765.5" y="1450" width="56.5" height="19.5" fill="#000"/><path d="M751,1452 L751,1467" stroke="#1a1a1a" stroke-width="1.4"/></svg>
<svg style="position:absolute;left:0px;top:0px;" width="100" height="1456" viewBox="0 0 100 1456"><g fill="none" stroke="#252d33" stroke-width="2.2" stroke-linejoin="round"><path d="M-6,895.5 L15,895.5 L15,913.5 L-6,913.5"/><path d="M-2,888.5 L21.5,888.5 L15,895.5 M21.5,888.5 L21.5,906.5 L15,913.5"/><path d="M-6,895.5 L-2,888.5"/></g><path d="M22,940 L34,940 L28,950 L16,953 L16,946 Z" fill="#8e9296"/><g fill="none" stroke="#252d33" stroke-width="2.2" stroke-linejoin="round"><path d="M-6,935.5 L15,935.5 L15,953.5 L-6,953.5"/><path d="M-2,928.5 L21.5,928.5 L15,935.5 M21.5,928.5 L21.5,946.5 L15,953.5"/><path d="M-6,935.5 L-2,928.5"/></g><path d="M-2,993 L20,993 L10,967 Z" fill="#252d33"/><path d="M0,978 L10,967 L20,993 Z" fill="#8e9296"/><path d="M10,966.5 L25.5,966.5 L20,993" fill="none" stroke="#252d33" stroke-width="2.2" stroke-linejoin="round"/><path d="M10,967 L20,993" stroke="#252d33" stroke-width="2"/><g fill="none" stroke="#252d33" stroke-width="2.1" stroke-linejoin="round"><path d="M7.5,1136 L7.5,1129.5 L11,1129.5 L11,1136"/><path d="M-4,1136 L17,1136 L17,1150 L14,1153 L-4,1153"/><path d="M-4,1143 L17,1143"/></g><g stroke="#252d33" stroke-width="1.6"><path d="M4,1152 L7,1148 M8,1152 L11,1148"/></g><g fill="none" stroke="#252d33" stroke-width="2.1" stroke-linejoin="round"><path d="M7.5,1176 L7.5,1169.5 L11,1169.5 L11,1176"/><path d="M-4,1176 L17,1176 L17,1190 L14,1193 L-4,1193"/><path d="M-4,1183 L17,1183"/></g><g stroke="#252d33" stroke-width="1.6"><path d="M4,1192 L7,1188 M8,1192 L11,1188"/></g><g fill="none" stroke="#252d33" stroke-width="2.1" stroke-linejoin="round"><path d="M7.5,1216 L7.5,1209.5 L11,1209.5 L11,1216"/><path d="M-4,1216 L17,1216 L17,1230 L14,1233 L-4,1233"/><path d="M-4,1223 L17,1223"/></g><g stroke="#252d33" stroke-width="1.6"><path d="M4,1232 L7,1228 M8,1232 L11,1228"/></g><g fill="none" stroke="#252d33" stroke-width="2.1" stroke-linejoin="round"><path d="M7.5,1256 L7.5,1249.5 L11,1249.5 L11,1256"/><path d="M-4,1256 L17,1256 L17,1270 L14,1273 L-4,1273"/><path d="M-4,1263 L17,1263"/></g><g stroke="#252d33" stroke-width="1.6"><path d="M4,1272 L7,1268 M8,1272 L11,1268"/></g><g fill="none" stroke="#252d33" stroke-width="2.1" stroke-linejoin="round"><path d="M7.5,1296 L7.5,1289.5 L11,1289.5 L11,1296"/><path d="M-4,1296 L17,1296 L17,1310 L14,1313 L-4,1313"/><path d="M-4,1303 L17,1303"/></g><g stroke="#252d33" stroke-width="1.6"><path d="M4,1312 L7,1308 M8,1312 L11,1308"/></g><g fill="none" stroke="#252d33" stroke-width="2.1" stroke-linejoin="round"><path d="M7.5,1336 L7.5,1329.5 L11,1329.5 L11,1336"/><path d="M-4,1336 L17,1336 L17,1350 L14,1353 L-4,1353"/><path d="M-4,1343 L17,1343"/></g><g stroke="#252d33" stroke-width="1.6"><path d="M4,1352 L7,1348 M8,1352 L11,1348"/></g><g fill="none" stroke="#252d33" stroke-width="2" stroke-linejoin="round"><path d="M37,1408 L37,1426 L43,1434 L49,1426 L49,1408"/><path d="M37,1426 L49,1426"/><path d="M28,1433 L41,1433"/></g><g fill="none" stroke="#252d33" stroke-width="2" stroke-linejoin="round"><path d="M37,1448 L37,1466 L43,1474 L49,1466 L49,1448"/><path d="M37,1466 L49,1466"/><path d="M28,1473 L41,1473"/></g></svg>
<div style="position:absolute;left:903px;top:820px;width:491px;height:636px;background:#fff;box-shadow:-1px 0 0 #dcdcdc, 1px 0 0 #e2e2e2, 0 -1px 0 #d8d8d8, inset 0 2px 0 #f2f2f2;"></div>
<div style="position:absolute;left:904px;top:1254px;width:490px;height:47.5px;background:#2963d9;"></div>
<div class="t" style="left:986.5px;top:831.93px;font-size:23.3px;-webkit-text-stroke:0.2px currentColor;letter-spacing:0.153px;color:#111111;">Nimellismitat ja sovitusvarat</div>
<div class="t" style="left:986.5px;top:879.93px;font-size:23.3px;-webkit-text-stroke:0.2px currentColor;letter-spacing:0.062px;color:#111111;">Muoto</div>
<div class="t" style="left:986.5px;top:927.93px;font-size:23.3px;-webkit-text-stroke:0.2px currentColor;letter-spacing:0.014px;color:#111111;">Oviasetukset ja avautuminen</div>
<div class="t" style="left:1014.5px;top:975.93px;font-size:23.3px;-webkit-text-stroke:0.2px currentColor;letter-spacing:0.023px;color:#111111;">Karmi ja ovilehti</div>
<div class="t" style="left:1042.4px;top:1023.93px;font-size:23.3px;-webkit-text-stroke:0.2px currentColor;letter-spacing:-0.124px;color:#111111;">Painovoimainen ilmanvaihto</div>
<div class="t" style="left:1014.5px;top:1071.93px;font-size:23.3px;-webkit-text-stroke:0.2px currentColor;letter-spacing:0.217px;color:#111111;">Ovilehden tyyppi</div>
<div class="t" style="left:1042.4px;top:1119.93px;font-size:23.3px;-webkit-text-stroke:0.2px currentColor;letter-spacing:-0.027px;color:#111111;">Painike ja potkulevy</div>
<div class="t" style="left:1014.5px;top:1167.93px;font-size:23.3px;-webkit-text-stroke:0.2px currentColor;letter-spacing:0.150px;color:#111111;">Aukon tyyppi ja pituus</div>
<div class="t" style="left:1042.4px;top:1215.93px;font-size:23.3px;-webkit-text-stroke:0.2px currentColor;letter-spacing:-0.171px;color:#111111;">Avausviivat</div>
<div class="t" style="left:1014.5px;top:1263.93px;font-size:23.3px;-webkit-text-stroke:0.2px currentColor;letter-spacing:0.461px;color:#ffffff;">Mallin attribuutit</div>
<div class="t" style="left:986.5px;top:1311.93px;font-size:23.3px;-webkit-text-stroke:0.2px currentColor;letter-spacing:-0.335px;color:#111111;">Seinän aukko</div>
<div class="t" style="left:1014.5px;top:1359.93px;font-size:23.3px;-webkit-text-stroke:0.2px currentColor;letter-spacing:-0.358px;color:#111111;">Pieli</div>
<div class="t" style="left:1014.5px;top:1407.93px;font-size:23.3px;-webkit-text-stroke:0.2px currentColor;letter-spacing:0.126px;color:#111111;">Eristet.sulku</div>
<svg style="position:absolute;left:0px;top:0px;" width="1400" height="1456" viewBox="0 0 1400 1456"><path d="M913,939.2 L920,946.2 L927,939.2" fill="none" stroke="#6b6b6b" stroke-width="2.4" stroke-linecap="round" stroke-linejoin="round"/><path d="M941,987.2 L948,994.2 L955,987.2" fill="none" stroke="#6b6b6b" stroke-width="2.4" stroke-linecap="round" stroke-linejoin="round"/><path d="M941,1083.2 L948,1090.2 L955,1083.2" fill="none" stroke="#6b6b6b" stroke-width="2.4" stroke-linecap="round" stroke-linejoin="round"/><path d="M941,1179.2 L948,1186.2 L955,1179.2" fill="none" stroke="#6b6b6b" stroke-width="2.4" stroke-linecap="round" stroke-linejoin="round"/><path d="M913,1323.2 L920,1330.2 L927,1323.2" fill="none" stroke="#6b6b6b" stroke-width="2.4" stroke-linecap="round" stroke-linejoin="round"/><g fill="none" stroke="#40474e" stroke-width="2.3"><rect x="946.5" y="833" width="15" height="26.5" rx="1.5"/><path d="M970.5,837 L970.5,855"/></g><path d="M951,847 L953,844.5" stroke="#40474e" stroke-width="1.8"/><g fill="#40474e"><path d="M970.5,832 L965.5,838 L975.5,838 Z M970.5,860 L965.5,854 L975.5,854 Z"/></g><g fill="none" stroke="#40474e" stroke-width="2.3"><rect x="950.3" y="880.5" width="14" height="27" rx="1.5"/><path d="M964.5,882 L970.5,882 L970.5,902 L964.5,902"/></g><path d="M954,896 L956,893.5" stroke="#40474e" stroke-width="1.8"/><g fill="none" stroke="#40474e" stroke-width="2.3"><rect x="952.5" y="928.8" width="15" height="26.5" rx="1.5"/></g><path d="M956.5,943 L958.5,940.5" stroke="#40474e" stroke-width="1.8"/><defs><clipPath id="mk1"><rect x="971" y="979" width="13" height="22"/></clipPath><clipPath id="mk2"><rect x="1005" y="1021" width="22.5" height="11.5"/></clipPath><clipPath id="mk3"><rect x="971" y="1364" width="12.7" height="21"/></clipPath><clipPath id="mk4"><rect x="971" y="1413" width="12.5" height="24"/></clipPath></defs><g stroke="#b9bcbf" stroke-width="2.2" clip-path="url(#mk1)"><path d="M945,1003 L971,977"/><path d="M950,1003 L976,977"/><path d="M955,1003 L981,977"/><path d="M960,1003 L986,977"/><path d="M965,1003 L991,977"/><path d="M970,1003 L996,977"/><path d="M975,1003 L1001,977"/><path d="M980,1003 L1006,977"/><path d="M985,1003 L1011,977"/><path d="M990,1003 L1016,977"/><path d="M995,1003 L1021,977"/><path d="M1000,1003 L1026,977"/></g><rect x="971" y="978.5" width="13" height="23" fill="none" stroke="#c4c7ca" stroke-width="1.5"/><g fill="none" stroke="#40474e" stroke-width="2.2"><path d="M984,981 L1006,981"/><rect x="984" y="981" width="11" height="8"/><path d="M995,987.5 L1006,987.5"/></g><g stroke="#b9bcbf" stroke-width="2" clip-path="url(#mk2)"><path d="M977,1046 L1003,1020"/><path d="M982,1046 L1008,1020"/><path d="M987,1046 L1013,1020"/><path d="M992,1046 L1018,1020"/><path d="M997,1046 L1023,1020"/><path d="M1002,1046 L1028,1020"/><path d="M1007,1046 L1033,1020"/><path d="M1012,1046 L1038,1020"/><path d="M1017,1046 L1043,1020"/><path d="M1022,1046 L1048,1020"/><path d="M1027,1046 L1053,1020"/><path d="M1032,1046 L1058,1020"/></g><rect x="1005" y="1021" width="22.5" height="11.5" fill="none" stroke="#b9bcbf" stroke-width="1.6"/><g fill="none" stroke="#a9adb1" stroke-width="1.8"><path d="M1007,1032 L1007,1055.5 M1015,1032 L1015,1055.5 M1007,1049 L1015,1049"/></g><g fill="none" stroke="#40474e" stroke-width="2"><path d="M999,1047 C1003,1038 1012,1040 1018,1040.5 C1022,1041 1026,1039 1029,1037"/><path d="M1023,1036.5 L1030,1036.5 L1030,1043"/></g><g fill="none" stroke="#40474e" stroke-width="2.3"><rect x="979.5" y="1073" width="15" height="26" rx="1.5"/><rect x="984.5" y="1077.5" width="5" height="9"/></g><g fill="none" stroke="#40474e" stroke-width="2"><rect x="1005" y="1119" width="11" height="30" rx="5.5"/><rect x="1009" y="1127" width="20.5" height="6.5" rx="3.2" fill="#fff"/></g><g fill="none" stroke="#40474e" stroke-width="2.1" stroke-linejoin="round"><path d="M976.5,1186 L985.7,1172.5 L998.5,1186 Z"/></g><g fill="none" stroke="#8b9095" stroke-width="2"><path d="M971,1182 L976.5,1182 L976.5,1190 L971,1190 M1006,1182 L1000.5,1182 L1000.5,1190 L1006,1190 M976.5,1186 L1000.5,1186"/></g><g fill="none" stroke="#8b9095" stroke-width="2.1"><rect x="1009" y="1217.2" width="14.5" height="25.5"/><path d="M1022.5,1218 L1010,1230 L1022.5,1242"/></g><g fill="none" stroke="#1e3a78" stroke-width="4" stroke-linejoin="round" opacity="0.45"><path d="M987.6,1272.5 L987.6,1261.5 L991.2,1261.5 L991.2,1272.5"/><path d="M977,1273.5 L1000.6,1273.5 L1000.6,1279.5 L977,1279.5 Z"/><path d="M977,1279.5 L972,1294.5 L998,1294.5 L1000.6,1291 L1000.6,1279.5"/><path d="M975.5,1289 L1000.5,1289"/></g><g fill="none" stroke="#ffffff" stroke-width="2.2" stroke-linejoin="round"><path d="M987.6,1272.5 L987.6,1261.5 L991.2,1261.5 L991.2,1272.5"/><path d="M977,1273.5 L1000.6,1273.5 L1000.6,1279.5 L977,1279.5 Z"/><path d="M977,1279.5 L972,1294.5 L998,1294.5 L1000.6,1291 L1000.6,1279.5"/><path d="M975.5,1289 L1000.5,1289"/></g><g stroke="#ffffff" stroke-width="1.8"><path d="M977,1294 L980,1290 M982,1294 L985,1290 M987,1294 L990,1290 M992,1294 L995,1290"/></g><g fill="none" stroke="#4a5157" stroke-width="2.3"><path d="M944.8,1341 L944.8,1311.5 L974.7,1311.5 L974.7,1341 L966.7,1341 L966.7,1319 L953,1319 L953,1341 Z"/></g><g stroke="#40474e" stroke-width="1.8" clip-path="url(#mk3)"><path d="M951,1390 L977,1364"/><path d="M957,1390 L983,1364"/><path d="M963,1390 L989,1364"/><path d="M969,1390 L995,1364"/><path d="M975,1390 L1001,1364"/><path d="M981,1390 L1007,1364"/><path d="M987,1390 L1013,1364"/></g><g fill="none" stroke="#40474e" stroke-width="2.2"><path d="M971,1364 L991.5,1364 M983.7,1364 L983.7,1385 L971,1385 L971,1364"/></g><g fill="none" stroke="#8b9095" stroke-width="2"><path d="M983.7,1370.5 L1006,1370.5 M983.7,1379 L1006,1379 M994,1370.5 L994,1379"/></g><g stroke="#b9bcbf" stroke-width="2.2" clip-path="url(#mk4)"><path d="M945,1436 L971,1410"/><path d="M950,1436 L976,1410"/><path d="M955,1436 L981,1410"/><path d="M960,1436 L986,1410"/><path d="M965,1436 L991,1410"/><path d="M970,1436 L996,1410"/><path d="M975,1436 L1001,1410"/><path d="M980,1436 L1006,1410"/><path d="M985,1436 L1011,1410"/><path d="M990,1436 L1016,1410"/><path d="M995,1436 L1021,1410"/><path d="M1000,1436 L1026,1410"/></g><g fill="none" stroke="#40474e" stroke-width="2"><path d="M971,1407.5 L993.5,1407.5 L993.5,1417 M971,1412 L988,1412 L988,1417"/></g><g fill="none" stroke="#8b9095" stroke-width="2"><path d="M983.5,1417.5 L1006,1417.5 M983.5,1425.5 L1006,1425.5 M994,1417.5 L994,1425.5 M983.5,1413 L983.5,1437"/></g><defs></defs></svg>
</body></html>
